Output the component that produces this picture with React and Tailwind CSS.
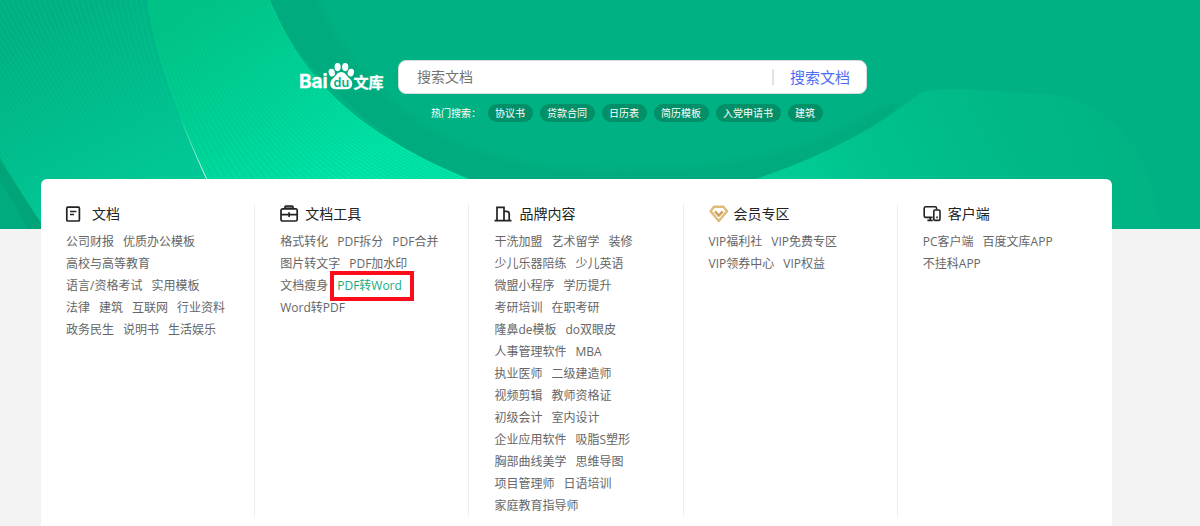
const hotSearches = ["协议书", "贷款合同", "日历表", "简历模板", "入党申请书", "建筑"];

const columns = [
  {
    title: "文档",
    icon: DocIcon,
    rows: [
      ["公司财报", "优质办公模板"],
      ["高校与高等教育"],
      ["语言/资格考试", "实用模板"],
      ["法律", "建筑", "互联网", "行业资料"],
      ["政务民生", "说明书", "生活娱乐"],
    ],
  },
  {
    title: "文档工具",
    icon: ToolboxIcon,
    rows: [
      ["格式转化", "PDF拆分", "PDF合并"],
      ["图片转文字", "PDF加水印"],
      ["文档瘦身", "PDF转Word"],
      ["Word转PDF"],
    ],
  },
  {
    title: "品牌内容",
    icon: BuildingIcon,
    rows: [
      ["干洗加盟", "艺术留学", "装修"],
      ["少儿乐器陪练", "少儿英语"],
      ["微盟小程序", "学历提升"],
      ["考研培训", "在职考研"],
      ["隆鼻de模板", "do双眼皮"],
      ["人事管理软件", "MBA"],
      ["执业医师", "二级建造师"],
      ["视频剪辑", "教师资格证"],
      ["初级会计", "室内设计"],
      ["企业应用软件", "吸脂S塑形"],
      ["胸部曲线美学", "思维导图"],
      ["项目管理师", "日语培训"],
      ["家庭教育指导师"],
    ],
  },
  {
    title: "会员专区",
    icon: VipIcon,
    rows: [
      ["VIP福利社", "VIP免费专区"],
      ["VIP领券中心", "VIP权益"],
    ],
  },
  {
    title: "客户端",
    icon: DevicesIcon,
    rows: [["PC客户端", "百度文库APP"], ["不挂科APP"]],
  },
];

function DocIcon() {
  return (
    <svg viewBox="0 0 20 20" className="mr-1 -ml-[3px] h-5 w-5" fill="none" stroke="#222" strokeWidth="1.7">
      <rect x="3.8" y="3.2" width="12.6" height="13.8" rx="1" />
      <path d="M7 7.6h6.4M7 10.6h4" strokeWidth="1.5" />
    </svg>
  );
}

function ToolboxIcon() {
  return (
    <svg viewBox="0 0 20 20" className="h-5 w-5" fill="none" stroke="#222" strokeWidth="1.7">
      <path d="M5 4.4V3q0-1 1-1h6q1 0 1 1v1.4" fill="#777" />
      <rect x="1" y="4.8" width="16.2" height="12.2" rx="1.6" />
      <path d="M1 10.6h16.2M9.1 8.2v4.8" />
    </svg>
  );
}

function BuildingIcon() {
  return (
    <svg viewBox="0 0 20 20" className="h-5 w-5" fill="none" stroke="#222" strokeWidth="1.7">
      <path d="M.5 16.6h17M3 16.6V3.4h7v13.2M10 7.4h2.6q2.6 0 2.6 2.6v6.6" />
    </svg>
  );
}

function VipIcon() {
  return (
    <svg viewBox="0 0 20 20" className="h-5 w-5" fill="none" strokeLinejoin="round">
      <path d="M5 2.8h9.4L18 7.2 9.8 17 1.6 7.2z" stroke="#e0bb78" strokeWidth="2.4" />
      <path d="M6 7.4l3.8 4.3 3.8-4.3" stroke="#cf9f58" strokeWidth="2.4" />
    </svg>
  );
}

function DevicesIcon() {
  return (
    <svg viewBox="0 0 20 20" className="h-5 w-5" fill="none" stroke="#222" strokeWidth="1.6">
      <path d="M9.6 13.4H2.8q-1.6 0-1.6-1.6V4.4q0-1.6 1.6-1.6H12q1.600 0 1.600 1.600v1.200M7.200 13.400v3M4.400 16.400h5.400" />
      <rect x="10.8" y="6" width="6.2" height="10.4" rx="1.2" />
      <path d="M13.2 13.4h1.600" />
    </svg>
  );
}

function Logo() {
  return (
    <a href="#" aria-label="Baidu 文库" className="mt-[3px] block shrink-0">
      <svg viewBox="0 0 86 30" className="h-[30px] w-[86px]" fill="#fff">
        <text x="0" y="25.4" fontSize="19" fontWeight="700" stroke="#fff" strokeWidth="0.3" fontFamily="Inter, sans-serif">
          Bai
        </text>
        <ellipse cx="32.8" cy="9.6" rx="3.1" ry="3.9" transform="rotate(-15 32.8 9.6)" />
        <ellipse cx="38.6" cy="4.1" rx="3.1" ry="4.1" />
        <ellipse cx="46.2" cy="4.1" rx="3.1" ry="4.1" />
        <ellipse cx="51.8" cy="9.6" rx="3.1" ry="3.9" transform="rotate(15 51.8 9.6)" />
        <path d="M42.3 9c4 0 5 3.800 8 6.200 4.800 3.800 3.700 11-2.500 11H36.700c-6.200 0-7.200-7.200-2.500-11 3-2.400 4.100-6.200 8.100-6.200z" />
        <text x="34.6" y="24" fontSize="12.5" fontWeight="600" fill="#00b083" fontFamily="Inter, sans-serif">
          du
        </text>
        <text x="54.4" y="25" fontSize="15" fontWeight="700" stroke="#fff" strokeWidth="0.3" fontFamily="'Noto Sans CJK SC', sans-serif">
          文库
        </text>
      </svg>
    </a>
  );
}

// curve between the left and right edge of a ribbon, t = 0..1
function blend(from, to, t) {
  const p = from.map((v, i) => (v + (to[i] - v) * t).toFixed(1));
  return `M${p[0]} ${p[1]}C${p[2]} ${p[3]} ${p[4]} ${p[5]} ${p[6]} ${p[7]}`;
}

const ribbonLeft = [147, 0, 155, 60, 180, 125, 230, 229];
const ribbonRight = [270, 0, 300, 70, 350, 150, 560, 210];
const sweepLeft = [-130, 0, -80, 60, -30, 120, 45, 229];

const range = (n) => Array.from({ length: n }, (_, i) => i);

function HeroBackground() {
  return (
    <svg
      viewBox="0 0 1200 229"
      preserveAspectRatio="none"
      className="absolute inset-0 h-full w-full"
      aria-hidden="true"
    >
      <defs>
        <linearGradient id="sweep" gradientUnits="userSpaceOnUse" x1="40" y1="20" x2="130" y2="190">
          <stop offset="0" stopColor="#00b082" />
          <stop offset="0.5" stopColor="#00bb8b" />
          <stop offset="1" stopColor="#00c796" />
        </linearGradient>
        <linearGradient id="ribbon" gradientUnits="userSpaceOnUse" x1="200" y1="0" x2="330" y2="190">
          <stop offset="0" stopColor="#00c486" />
          <stop offset="0.5" stopColor="#00d296" />
          <stop offset="1" stopColor="#00e6aa" />
        </linearGradient>
        <linearGradient id="hill" gradientUnits="userSpaceOnUse" x1="800" y1="185" x2="1000" y2="80">
          <stop offset="0" stopColor="#00cc94" />
          <stop offset="0.35" stopColor="#00c28d" />
          <stop offset="1" stopColor="#00b785" />
        </linearGradient>
        <linearGradient id="hillFade" gradientUnits="userSpaceOnUse" x1="1060" y1="160" x2="1165" y2="130">
          <stop offset="0" stopColor="#00b283" stopOpacity="0" />
          <stop offset="1" stopColor="#00b283" />
        </linearGradient>
        <linearGradient id="glow" x1="0" y1="0" x2="0" y2="1">
          <stop offset="0.5" stopColor="#fff" stopOpacity="0" />
          <stop offset="0.75" stopColor="#fff" stopOpacity="0.8" />
        </linearGradient>
        <filter id="soft" x="-10%" y="-10%" width="120%" height="120%">
          <feGaussianBlur stdDeviation="5" />
        </filter>
      </defs>
      <rect width="1200" height="229" fill="#00b283" />
      <path d="M260 0H330L900 105Q850 150 755 190H470Q330 110 260 0z" fill="#00ac7e" />
      <path d="M310 -20C350 70 420 166 600 168C750 168 830 145 900 92L1220 80V-20z" fill="#00b283" filter="url(#soft)" />

      <path d="M0 0H147C155 60 180 125 230 229H45Q25 200 0 158z" fill="url(#sweep)" />
      <path d="M0 158Q25 200 45 229H0z" fill="#00a477" />
      <path d="M0 182Q16 204 28 229H0z" fill="#00ab7d" />
      <g fill="none" stroke="#12cb99" strokeOpacity="0.35">
        {range(50).map((i) => (
          <path key={i} d={blend(sweepLeft, ribbonLeft, (i + 1) / 51)} />
        ))}
      </g>

      <path d="M147 0H270C300 70 350 150 560 210V229H230C180 125 155 60 147 0z" fill="url(#ribbon)" />
      <g fill="none" stroke="#00b583" strokeOpacity="0.35">
        {range(38).map((i) => (
          <path key={i} d={blend(ribbonLeft, ribbonRight, (i + 1) / 39)} />
        ))}
      </g>
      <path d="M147 0C155 60 180 125 230 229" fill="none" stroke="url(#glow)" />

      <path d="M740 184Q850 150 922 92Q940 87 980 90L1060 95Q1150 120 1160 229H740z" fill="url(#hill)" />
      <path d="M1000 80H1170V229H1000z" fill="url(#hillFade)" />
    </svg>
  );
}

function SearchBar() {
  return (
    <form
      onSubmit={(e) => e.preventDefault()}
      className="flex h-[34px] items-center rounded-lg border border-[#d5dcd9] bg-white"
    >
      <input
        type="text"
        aria-label="搜索文档"
        placeholder="搜索文档"
        className="min-w-0 flex-1 pl-[18px] text-[14px] leading-5 outline-none placeholder:text-[#757575]"
      />
      <button type="submit" className="border-l-2 border-[#e2e2e2] px-4 text-[15px] leading-4 text-[#4e6ef2]">
        搜索文档
      </button>
    </form>
  );
}

function Column({ title, icon: Icon, rows }) {
  return (
    <section className="border-r border-[#eee] pl-[25px] last:border-r-0">
      <h2 className="flex h-5 items-center text-[14px] leading-5 text-[#222]">
        <Icon />
        <span className="ml-[5px]">{title}</span>
      </h2>
      <ul className="mt-[7px] text-[12px] leading-[22px] text-[#666]">
        {rows.map((row) => (
          <li key={row[0]} className="flex gap-[9px] whitespace-nowrap">
            {row.map((label) =>
              label === "PDF转Word" ? (
                <a key={label} href="#" className="relative text-[#1aab7d]">
                  {label}
                  <span className="absolute -top-1 -right-3 -bottom-1 -left-[7px] border-4 border-[#fc0d1b]" />
                </a>
              ) : (
                <a key={label} href="#">
                  {label}
                </a>
              ),
            )}
          </li>
        ))}
      </ul>
    </section>
  );
}

export default function App() {
  return (
    <div className="min-h-screen bg-[#f3f3f3] font-['Open_Sans','Noto_Sans_CJK_SC',sans-serif]">
      <header className="relative h-[229px]">
        <HeroBackground />
        <div className="relative mr-[333px] ml-[299px] flex items-start gap-[13px] pt-[60px]">
          <Logo />
          <div className="min-w-0 flex-1">
            <SearchBar />
            <div className="mt-[10px] ml-[33px] flex items-center gap-[7px] text-[10px] leading-[18px] whitespace-nowrap text-white">
              <span className="w-[50px]">热门搜索：</span>
              {hotSearches.map((word) => (
                <a key={word} href="#" className="rounded-full bg-[#038f68] pr-2 pl-[7px]">
                  {word}
                </a>
              ))}
            </div>
          </div>
        </div>
      </header>
      <main className="relative mr-[88px] -mt-[50px] ml-[41px] grid grid-cols-5 rounded-t-md bg-white pt-[25px] pb-3">
        {columns.map((column) => (
          <Column key={column.title} {...column} />
        ))}
      </main>
    </div>
  );
}
